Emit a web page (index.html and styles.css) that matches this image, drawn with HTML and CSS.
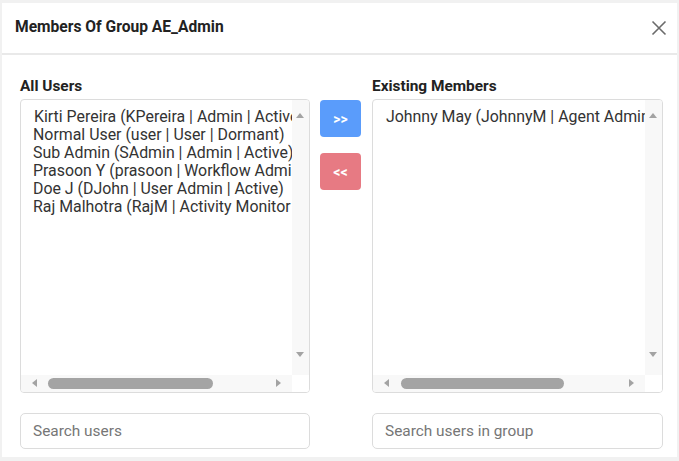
FILE: index.html
```html
<!DOCTYPE html>
<html>
<head>
<meta charset="utf-8">
<link rel="stylesheet" href="styles.css">
</head>
<body>
<div class="dialog">
  <div class="header">
    <div class="title">Members Of Group AE_Admin</div>
    <svg class="close" width="16" height="16" viewBox="0 0 16 16"><path d="M1.5 1.5 L14.5 14.5 M14.5 1.5 L1.5 14.5" stroke="#6b6b6b" stroke-width="1.6" fill="none"/></svg>
  </div>
  <div class="body">
    <div class="col">
      <div class="label">All Users</div>
      <div class="list">
        <div class="items">
          <div class="item first">Kirti Pereira (KPereira | Admin | Active)</div>
          <div class="item">Normal User (user | User | Dormant)</div>
          <div class="item">Sub Admin (SAdmin | Admin | Active)</div>
          <div class="item">Prasoon Y (prasoon | Workflow Admin | Active)</div>
          <div class="item">Doe J (DJohn | User Admin | Active)</div>
          <div class="item">Raj Malhotra (RajM | Activity Monitor | Active)</div>
        </div>
        <div class="vbar"><span class="arr up"></span><span class="arr down"></span></div>
        <div class="hbar"><span class="arr left"></span><span class="thumb"></span><span class="arr right"></span></div>
        <div class="corner"></div>
      </div>
      <input class="search" type="text" placeholder="Search users">
    </div>
    <div class="mid">
      <button class="btn add">&gt;&gt;</button>
      <button class="btn remove">&lt;&lt;</button>
    </div>
    <div class="col right">
      <div class="label">Existing Members</div>
      <div class="list">
        <div class="items">
          <div class="item first">Johnny May (JohnnyM | Agent Admin | Active)</div>
        </div>
        <div class="vbar"><span class="arr up"></span><span class="arr down"></span></div>
        <div class="hbar"><span class="arr left"></span><span class="thumb"></span><span class="arr right"></span></div>
        <div class="corner"></div>
      </div>
      <input class="search" type="text" placeholder="Search users in group">
    </div>
  </div>
</div>
</body>
</html>
```
FILE: styles.css
```css
html, body {
  margin: 0;
  padding: 0;
}
body {
  background: #f1f1f1;
  width: 679px;
  height: 461px;
  padding: 3px 2px 4px 2px;
  box-sizing: border-box;
  font-family: Roboto, "Liberation Sans", sans-serif;
  color: #333;
}
.dialog {
  background: #fff;
  height: 454px;
  display: flex;
  flex-direction: column;
}
.header {
  height: 50px;
  border-bottom: 2px solid #e9e9e9;
  display: flex;
  align-items: center;
  justify-content: space-between;
  padding: 0 10px 0 13px;
  flex: none;
}
.title {
  font-weight: 700;
  font-size: 15.6px;
  color: #222;
  margin-top: -2px;
}
.close {
  margin-top: -1px;
}
.body {
  display: flex;
  padding: 21px 14px 0 18px;
}
.col {
  width: 290px;
  display: flex;
  flex-direction: column;
}
.col.right {
  width: 291px;
}
.label {
  font-weight: 700;
  font-size: 15.4px;
  line-height: 20px;
  color: #222;
  margin-bottom: 3px;
}
.list {
  height: 294px;
  box-sizing: border-box;
  border: 1px solid #dcdcdc;
  border-radius: 4px;
  display: grid;
  grid-template-columns: 1fr 17px;
  grid-template-rows: 1fr 17px;
  overflow: hidden;
}
.items {
  padding: 8px 0 0 12px;
  overflow: hidden;
  white-space: nowrap;
  font-size: 15.9px;
  line-height: 18px;
  color: #333;
}
.item.first {
  padding-left: 1px;
}
.vbar {
  background: #f8f8f8;
  position: relative;
}
.hbar {
  background: #f8f8f8;
  position: relative;
}
.corner {
  background: #fff;
}
.arr {
  position: absolute;
  width: 0;
  height: 0;
}
.arr.up {
  left: 4px;
  top: 13px;
  border-left: 4.5px solid transparent;
  border-right: 4.5px solid transparent;
  border-bottom: 5px solid #a3a3a3;
}
.arr.down {
  left: 4px;
  bottom: 18px;
  border-left: 4.5px solid transparent;
  border-right: 4.5px solid transparent;
  border-top: 5px solid #a3a3a3;
}
.arr.left {
  left: 11px;
  top: 4px;
  border-top: 4.5px solid transparent;
  border-bottom: 4.5px solid transparent;
  border-right: 5px solid #a3a3a3;
}
.arr.right {
  right: 11px;
  top: 4px;
  border-top: 4.5px solid transparent;
  border-bottom: 4.5px solid transparent;
  border-left: 5px solid #a3a3a3;
}
.thumb {
  position: absolute;
  left: 27px;
  top: 3px;
  width: 165px;
  height: 11px;
  border-radius: 6px;
  background: #a4a4a4;
}
.right .thumb {
  left: 28px;
  width: 163px;
}
.search {
  margin-top: 20px;
  height: 36px;
  box-sizing: border-box;
  border: 1px solid #dcdcdc;
  border-radius: 5px;
  padding: 0 12px;
  font-family: Roboto, "Liberation Sans", sans-serif;
  font-size: 15.4px;
  color: #333;
  outline: none;
}
.search::placeholder {
  color: #767676;
}
.mid {
  width: 62px;
  display: flex;
  flex-direction: column;
  align-items: flex-start;
  padding: 24px 0 0 10px;
  box-sizing: border-box;
  gap: 16px;
}
.btn {
  width: 41px;
  height: 37px;
  border: none;
  border-radius: 4px;
  color: #fff;
  font-family: Roboto, "Liberation Sans", sans-serif;
  font-weight: 700;
  font-size: 14px;
  padding: 0;
}
.btn.add {
  background: #5a9cfb;
}
.btn.remove {
  background: #e77a83;
}
```
